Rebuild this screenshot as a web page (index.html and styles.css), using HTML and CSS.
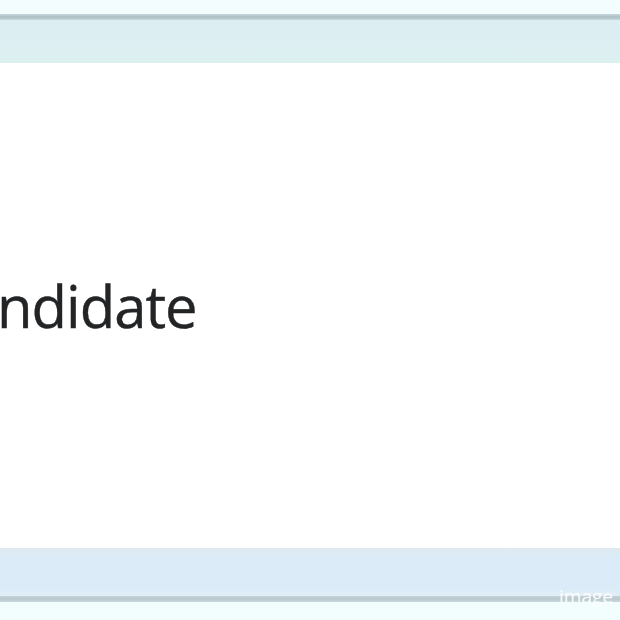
FILE: index.html
```html
<!DOCTYPE html>
<html>
<head>
<meta charset="utf-8">
<link rel="stylesheet" href="styles.css">
</head>
<body>
<div class="page">
  <div class="top-strip"></div>
  <div class="top-line"></div>
  <div class="top-bar"></div>
  <div class="content">
    <div class="label">ndidate</div>
  </div>
  <div class="bottom-bar"></div>
  <div class="bottom-line"></div>
  <div class="bottom-strip"></div>
  <div class="watermark">image</div>
</div>
</body>
</html>
```
FILE: styles.css
```css
html, body {
  margin: 0;
  padding: 0;
  background: #ffffff;
}
.page {
  position: relative;
  width: 620px;
  height: 620px;
  display: flex;
  flex-direction: column;
  overflow: hidden;
}
.top-strip {
  height: 14px;
  background: #f3fdfd;
}
.top-line {
  height: 6px;
  background: linear-gradient(#c8d6da, #aebfc4 50%, #c9dade);
}
.top-bar {
  height: 43px;
  background: linear-gradient(#dcedf3, #ddf0f0);
}
.content {
  flex: 1;
  background: #ffffff;
  display: flex;
  flex-direction: column;
  padding-top: 203px;
}
.label {
  font-family: "Open Sans", "Noto Sans", sans-serif;
  font-size: 58px;
  line-height: 80px;
  color: #222426;
  letter-spacing: -1px;
  -webkit-text-stroke: 0.4px #222426;
  margin-left: -3px;
}
.bottom-bar {
  height: 48px;
  background: linear-gradient(#dfe9f0, #dbecf8 20%, #dbecf8 85%, #e2eef6);
}
.bottom-line {
  height: 6px;
  background: linear-gradient(#c4d2d8, #b9c9cf 50%, #c8d8dc);
}
.bottom-strip {
  height: 18px;
  background: #f2fdfd;
}
.watermark {
  position: absolute;
  right: 7px;
  bottom: 14px;
  font-family: "Open Sans", sans-serif;
  font-size: 19px;
  line-height: 19px;
  color: rgba(255, 255, 255, 0.95);
}
```
